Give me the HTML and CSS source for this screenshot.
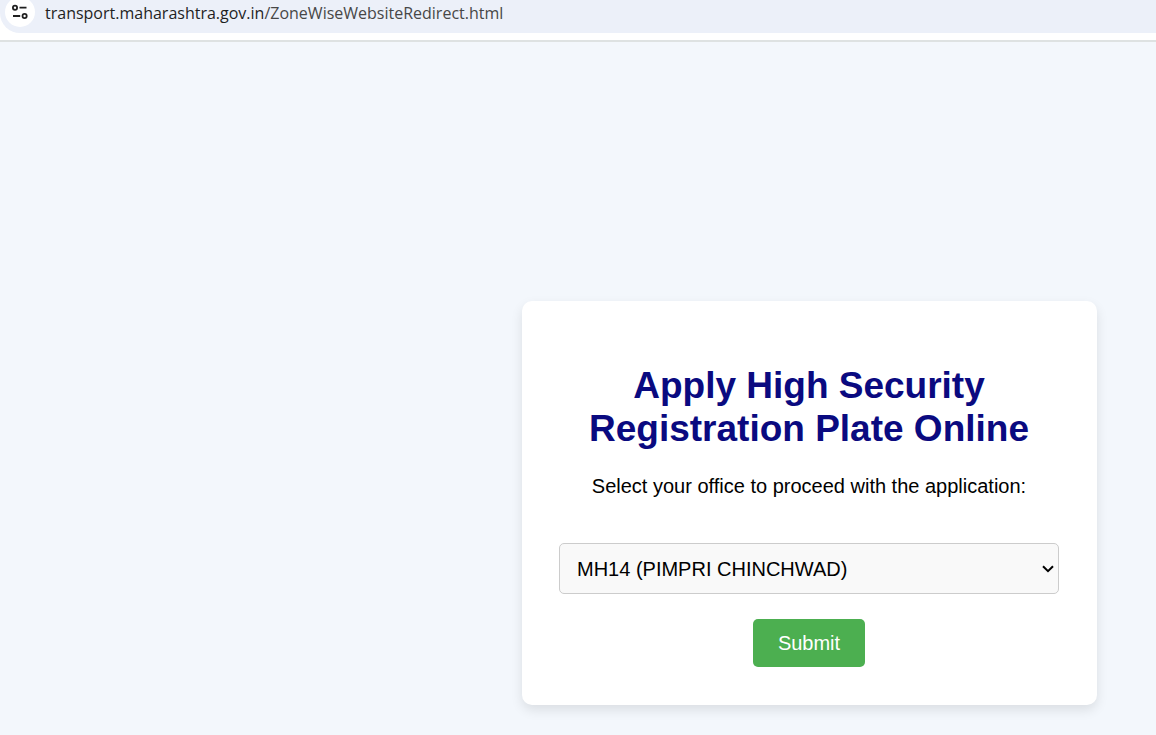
FILE: index.html
```
<!DOCTYPE html>
<html lang="en">
<head>
<meta charset="utf-8">
<meta name="viewport" content="width=device-width, initial-scale=1">
<title>Apply High Security Registration Plate Online</title>
<link rel="stylesheet" href="styles.css">
</head>
<body>
<header class="toolbar">
  <div class="address-bar">
    <button class="site-info" type="button" aria-label="View site information">
      <svg width="16" height="16" viewBox="0 0 16 16" fill="none" stroke="#1f1f1f" stroke-width="1.8" aria-hidden="true">
        <circle cx="3" cy="3.7" r="2.1"/>
        <path d="M7.5 3.7H14.5M1 12H8.2"/>
        <circle cx="12.6" cy="12" r="2.1"/>
      </svg>
    </button>
    <div class="url">transport.maharashtra.gov.in<span class="url-path">/ZoneWiseWebsiteRedirect.html</span></div>
  </div>
</header>
<main class="page">
  <form class="card">
    <h1 class="title">Apply High Security Registration Plate Online</h1>
    <label class="prompt" for="office">Select your office to proceed with the application:</label>
    <div class="office-field">
      <select class="office" id="office">
        <option>MH14 (PIMPRI CHINCHWAD)</option>
      </select>
      <svg class="chevron" width="12" height="8" viewBox="0 0 12 8" fill="none" stroke="#000" stroke-width="2" aria-hidden="true">
        <path d="M1 1.2 6 6.2 11 1.2"/>
      </svg>
    </div>
    <button class="submit" type="button">Submit</button>
  </form>
</main>
</body>
</html>
```
FILE: styles.css
```
* {
  box-sizing: border-box;
}

body {
  display: flex;
  flex-direction: column;
  min-height: 100vh;
  margin: 0;
  background: #f3f7fc;
  font-family: Arial, "Liberation Sans", sans-serif;
}

.toolbar {
  padding-bottom: 7px;
  border-bottom: 2px solid #dee2e2;
  background: #fff;
}

.address-bar {
  display: flex;
  align-items: flex-end;
  gap: 10px;
  height: 33px;
  padding: 0 0 6px 5px;
  border-bottom-left-radius: 20px;
  background: #ecf0f9;
}

.site-info {
  display: flex;
  flex: none;
  align-items: center;
  justify-content: center;
  width: 30px;
  height: 30px;
  padding: 0;
  border: 0;
  border-radius: 50%;
  background: #fff;
}

.url {
  color: #1f1f1f;
  font-family: "Segoe UI", "Open Sans", sans-serif;
  font-size: 16px;
  line-height: 28px;
  white-space: nowrap;
}

.url-path {
  color: #474747;
}

.page {
  display: flex;
  flex: 1;
  align-items: flex-end;
  justify-content: flex-end;
  padding: 30px 59px;
}

.card {
  display: flex;
  flex-direction: column;
  align-items: center;
  width: 100%;
  max-width: 575px;
  padding: 63px 38px 38px 37px;
  border-radius: 10px;
  background: #fff;
  box-shadow: 0 5px 12px rgba(0, 0, 0, 0.1);
  text-align: center;
}

.title {
  margin: 0 0 24px;
  color: #0a0a80;
  font-size: 37px;
  line-height: 43px;
}

.prompt {
  margin-bottom: 45px;
  font-size: 20px;
  line-height: 24px;
}

.office-field {
  position: relative;
  width: 100%;
  margin-bottom: 25px;
}

.office {
  display: block;
  width: 100%;
  height: 51px;
  padding: 0 40px 0 17px;
  border: 1px solid #ccc;
  border-radius: 5px;
  appearance: none;
  background: #f9f9f9;
  color: #000;
  font-family: inherit;
  font-size: 20px;
}

.chevron {
  position: absolute;
  top: 22px;
  right: 5px;
  pointer-events: none;
}

.submit {
  height: 48px;
  padding: 0 25px;
  border: 0;
  border-radius: 5px;
  background: #4caf50;
  color: #fff;
  font-family: inherit;
  font-size: 20px;
}
```
